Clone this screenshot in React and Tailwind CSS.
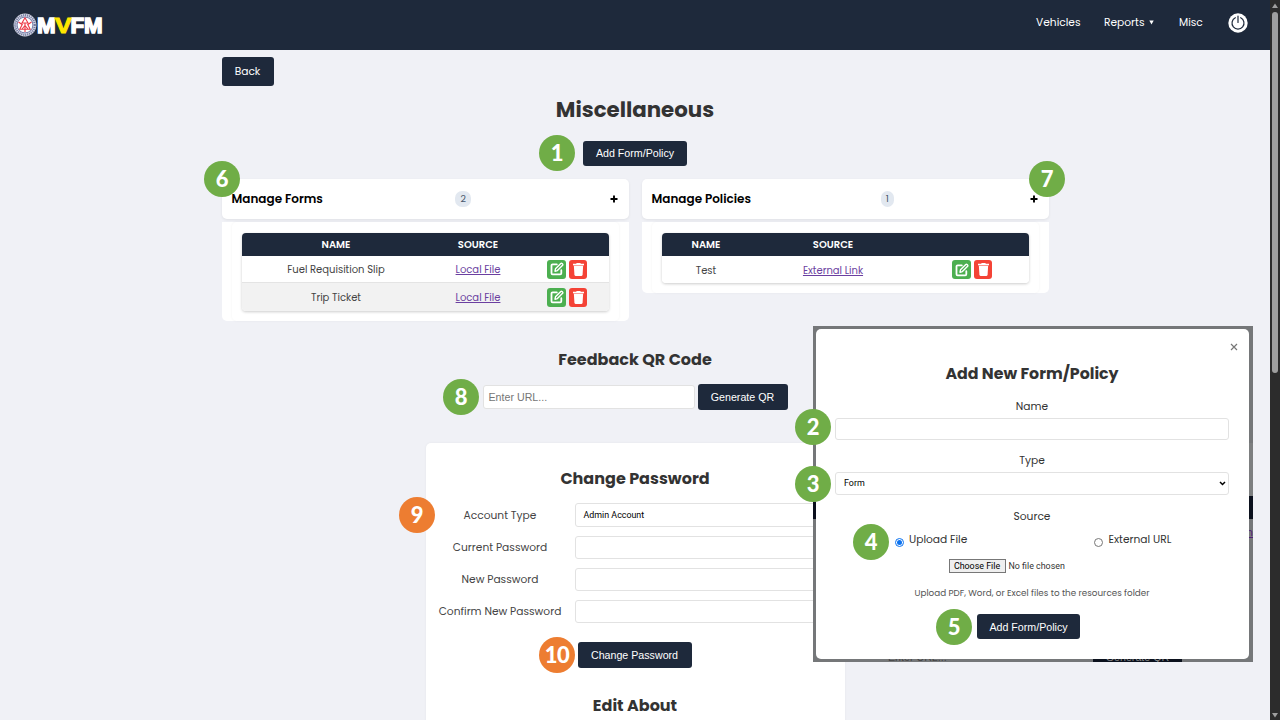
import React from "react";

const POPPINS = "font-['Poppins','Inter',sans-serif]";
const ARIAL = "font-['Liberation_Sans',Arial,sans-serif]";

function EditIcon() {
  return (
    <svg width="14" height="14" viewBox="0 0 14 14" fill="none" stroke="#fff">
      <path d="M6.800 2.400H2.600A1.100 1.100 0 0 0 1.500 3.500V11.300A1.100 1.100 0 0 0 2.600 12.400H10.200A1.100 1.100 0 0 0 11.300 11.300V8.200" strokeWidth="1.800" strokeLinecap="round" />
      <path d="M5 9.200l.5-2.400L10.800 1.500a.9.900 0 0 1 1.200 0l.6.6a.9.900 0 0 1 0 1.200L7.400 8.600z" strokeWidth="1.400" strokeLinejoin="round" />
    </svg>
  );
}

function TrashIcon() {
  return (
    <svg width="13" height="15" viewBox="0 0 13 15" fill="#fff">
      <path d="M4.600 1h3.800l.4.700H12v1.300H1V1.700h3.200z" />
      <path d="M1.300 3h10.400v.9H1.300z" opacity=".5" />
      <path d="M1.900 3.900h9.200l-.5 8.900c-.1.700-.5 1.100-1.100 1.100H3.500c-.6 0-1-.4-1.100-1.100z" />
    </svg>
  );
}

function Actions() {
  return (
    <div className="flex gap-[3px]">
      <span className="flex h-[19px] w-[19px] items-center justify-center rounded-[3px] bg-[#4caf50]">
        <EditIcon />
      </span>
      <span className="flex h-[19px] w-[17.5px] items-center justify-center rounded-[3px] bg-[#f44336]">
        <TrashIcon />
      </span>
    </div>
  );
}

function Section({ title, count, countClass, cols, rows }) {
  return (
    <section className="flex w-[407px] flex-col gap-[3px]">
      <div className="flex h-10 items-center justify-between rounded-[5px] bg-white px-[10px] shadow-[0_1px_3px_rgba(0,0,0,0.07)]">
        <h3 className="whitespace-nowrap text-[12px] font-semibold text-black">{title}</h3>
        <span className={`flex h-4 items-center justify-center rounded-[7px] bg-[#e2e8f0] text-[9.5px] text-[#475569] ${countClass}`}>{count}</span>
        <span className="flex w-[15px] justify-end pr-px">
          <svg width="8" height="8" viewBox="0 0 8 8">
            <path d="M4 .5v7M.5 4h7" stroke="#000" strokeWidth="1.9" />
          </svg>
        </span>
      </div>
      <div className="rounded-b-[5px] bg-white px-[10px]">
        <div className="rounded-[5px] px-[10px] pt-[11px] pb-[10px] shadow-[0_0_3px_rgba(0,0,0,0.05)]">
          <div className="overflow-hidden rounded-[4px] shadow-[0_1px_3px_rgba(0,0,0,0.2)]">
            <div className={`grid h-[23px] items-center bg-[#1e293b] text-center text-[10px] font-semibold text-white ${cols}`}>
              <span className="pl-px">NAME</span>
              <span className="pl-px">SOURCE</span>
              <span />
            </div>
            {rows.map(([name, link]) => (
              <div key={name} className={`grid h-[27.4px] items-center justify-items-center border-b border-[#e4e4e4] text-[10px] text-[#444] last:border-b-0 odd:bg-[#f2f2f2] even:bg-white ${cols}`}>
                <span className="whitespace-nowrap pl-px pt-[1.5px]">{name}</span>
                <span className="whitespace-nowrap pl-px pt-[1.5px] text-[#6b3fa0] underline">{link}</span>
                <Actions />
              </div>
            ))}
          </div>
        </div>
      </div>
    </section>
  );
}

function DarkButton({ className = "", children }) {
  return (
    <button className={`flex items-center justify-center whitespace-nowrap rounded-[3px] bg-[#1e293b] text-[10.67px] text-white ${ARIAL} ${className}`}>{children}</button>
  );
}

function Badge({ n, color = "bg-[#70ad47]", place }) {
  return (
    <span className={`absolute z-20 flex h-9 w-9 items-center justify-center rounded-full font-['Lato',sans-serif] text-[22px] font-black leading-none tracking-[-0.5px] text-white ${color} ${place}`}>{n}</span>
  );
}

function PasswordRow({ label, children, className = "" }) {
  return (
    <div className={`flex items-center ${className}`}>
      <label className="w-[149px] whitespace-nowrap pt-[2px] text-center text-[10.67px] text-[#444]">{label}</label>
      <div className="flex h-full flex-1 items-center rounded-[3px] border border-[#e2e2e2] bg-white px-2 text-[8.89px] text-black">{children}</div>
    </div>
  );
}

function Modal() {
  return (
    <div className="absolute left-[813px] top-[326px] z-10 h-[336px] w-[440px] overflow-hidden bg-[#757779]">
      <div className="absolute right-0 top-[117px] h-[53px] w-1 bg-[#7d7f80]" />
      <div className="absolute right-0 top-[170px] h-[23px] w-1 bg-[#0b111d]" />
      <div className="absolute left-0 top-[176px] h-[17px] w-1 bg-[#0b0f1d]" />
      <span className="absolute right-0 top-[199px] text-[10px] text-[#4f1d78] underline">n</span>
      <span className={`absolute left-[75px] top-[325px] text-[10.67px] leading-[13px] text-[#444] ${ARIAL}`}>Enter URL...</span>
      <div className={`absolute left-[280px] top-[320px] h-[20px] w-[89px] bg-[#0b111d] pt-[5px] text-center text-[10.67px] leading-[13px] text-[#888] ${ARIAL}`}>Generate QR</div>

      <div className="relative ml-[2.5px] mt-[2.5px] flex h-[330px] w-[433.5px] flex-col rounded-[5px] bg-white pl-[19.5px] pr-5 text-[#333]">
        <svg width="8" height="8" viewBox="0 0 8 8" className="absolute right-[11.5px] top-[14px]">
          <path d="M1 1l6 6M7 1l-6 6" stroke="#777" strokeWidth="1.2" />
        </svg>
        <h2 className="mt-[33px] text-center text-[15.8px] font-bold leading-6">Add New Form/Policy</h2>
        <label className="mt-[13px] text-center text-[10.67px] leading-4">Name</label>
        <div className="mt-[3px] h-[22px] rounded-[3px] border border-[#e2e2e2]" />
        <label className="mt-[13px] text-center text-[10.67px] leading-4">Type</label>
        <div className="mt-[3.500px] flex h-[23px] items-center justify-between rounded-[3px] border border-[#e2e2e2] pl-2 pr-[2px] font-['Roboto',sans-serif] text-[8.89px] text-black">
          <span className="pt-px">Form</span>
          <svg width="7" height="5" viewBox="0 0 7 5"><path d="M1 1l2.5 2.5L6 1" fill="none" stroke="#000" strokeWidth="1.5" /></svg>
        </div>
        <label className="mt-[13.500px] text-center text-[10.67px] leading-4">Source</label>
        <div className="mt-[7px] flex h-4 items-center text-[10.67px]">
          <span className="ml-[60px] mt-[5px] flex h-[9px] w-[9px] items-center justify-center rounded-full border border-[#0b72f0]">
            <span className="h-[5px] w-[5px] rounded-full bg-[#0b72f0]" />
          </span>
          <span className="ml-[5px] w-[185px] whitespace-nowrap">Upload File</span>
          <span className="mt-[5px] h-[9px] w-[9px] rounded-full border border-[#777]" />
          <span className="ml-[5.500px] whitespace-nowrap">External URL</span>
        </div>
        <div className="ml-[113.500px] mt-[11.500px] flex h-[14px] items-center gap-[3px] whitespace-nowrap font-['Roboto',sans-serif] text-[8.89px]">
          <span className="flex h-[14px] w-[57px] items-center justify-center border border-[#777] bg-[#efefef] pt-px text-black">Choose File</span>
          <span className="pt-px">No file chosen</span>
        </div>
        <p className="mt-[13px] whitespace-nowrap text-center text-[8.8px] leading-[14px] text-[#555]">Upload PDF, Word, or Excel files to the resources folder</p>
        <DarkButton className="ml-[142px] mt-[14px] h-[25px] w-[103px]">Add Form/Policy</DarkButton>
      </div>
    </div>
  );
}

export default function App() {
  return (
    <div className={`relative flex h-[720px] w-[1280px] overflow-hidden bg-[#f0f1f6] ${POPPINS}`}>
      <div className="flex w-[1270px] flex-col">
        <header className="flex h-[50px] shrink-0 items-center justify-between bg-[#1e293b] pl-[13px] pr-[22px] text-white">
          <div className="flex items-center">
            <svg width="24" height="24" viewBox="0 0 24 24">
              <circle cx="12" cy="12" r="11.4" fill="#d9dbe6" />
              <circle cx="12" cy="12" r="9.8" fill="none" stroke="#7179a0" strokeWidth="2.2" strokeDasharray="1.1 .9" />
              <circle cx="12" cy="12" r="7.9" fill="#fff" stroke="#424d8c" strokeWidth=".7" />
              <path d="M12 4.800l-3 5.200h6zM12 10v9M5.500 9l3.500 2.500M18.500 9L15 11.500M9.500 11l-2.700 5.200h10.400L14.500 11M9 16l3-3.500 3 3.500" fill="none" stroke="#ec3a48" strokeWidth="1.100" />
            </svg>
            <span className={`flex h-6 w-[67px] items-center whitespace-nowrap pt-px text-[22.300px] font-bold leading-6 [-webkit-text-stroke:1.500px_#fff] ${ARIAL}`}>
              <span>M<span className="inline-block scale-x-112 text-[#ffe600] [-webkit-text-stroke:1px_#ffe600]">V</span>FM</span>
            </span>
          </div>
          <nav className="flex items-center pb-[5px] text-[10.67px]">
            <span className="w-[68px]">Vehicles</span>
            <span className="w-[45px]">Reports</span>
            <svg width="5" height="5" viewBox="0 0 5 5" className="mr-[25px]"><path d="M.3.5h4.400L2.500 4.500z" fill="#fff" /></svg>
            <span className="w-[49px]">Misc</span>
            <svg width="20" height="20" viewBox="0 0 20 20">
              <circle cx="10" cy="10" r="9.700" fill="#fff" />
              <path d="M7.300 4.700a6 6 0 1 0 5.400 0M10 3v6.500" fill="none" stroke="#1e293b" strokeWidth="1.200" strokeLinecap="round" />
            </svg>
          </nav>
        </header>

        <main className="flex flex-col items-center text-[#333]">
          <div className="mt-[7px] w-[827px]">
            <button className="flex h-[29px] w-[52px] items-center justify-center rounded-[3px] bg-[#1e293b] text-[10.67px] text-white">Back</button>
          </div>
          <h1 className="mt-[8px] text-[21.33px] font-bold leading-8">Miscellaneous</h1>
          <DarkButton className="mt-[14.500px] h-[25.500px] w-[104px]">Add Form/Policy</DarkButton>
          <div className="mt-[13px] flex h-[142px] items-start gap-[13px]">
            <Section title="Manage Forms" count="2" countClass="w-4" cols="grid-cols-[188px_96px_83px]"
              rows={[["Fuel Requisition Slip", "Local File"], ["Trip Ticket", "Local File"]]} />
            <Section title="Manage Policies" count="1" countClass="w-[13px]" cols="grid-cols-[88px_166px_113px]"
              rows={[["Test", "External Link"]]} />
          </div>
          <h2 className="mt-[27px] text-[16px] font-bold leading-6">Feedback QR Code</h2>
          <div className="mt-[12px] flex h-[26px] items-center gap-[3px]">
            <div className={`flex h-6 w-[212px] items-center rounded-[3px] border border-[#e2e2e2] bg-white pl-[5px] text-[10.67px] text-[#757575] ${ARIAL}`}>Enter URL...</div>
            <DarkButton className="h-[25.500px] w-[90px]">Generate QR</DarkButton>
          </div>
          <section className="mt-[33px] flex h-[300px] w-[419px] flex-col rounded-t-[5px] bg-white pr-[14px] shadow-[0_0_3px_rgba(0,0,0,0.05)]">
            <h2 className="ml-[14px] mt-[24px] text-center text-[16px] font-bold leading-6">Change Password</h2>
            <PasswordRow label="Account Type" className="mt-[11.500px] h-6"><span className="pt-[1.5px] font-['Roboto',sans-serif]">Admin Account</span></PasswordRow>
            <PasswordRow label="Current Password" className="mt-[9.500px] h-[22.500px]" />
            <PasswordRow label="New Password" className="mt-[9.500px] h-[22.500px]" />
            <PasswordRow label="Confirm New Password" className="mt-[9.500px] h-[22.500px]" />
            <DarkButton className="ml-[152px] mt-[19.500px] h-[25.500px] w-[114px]">Change Password</DarkButton>
            <h2 className="ml-[14px] mt-[26px] text-center text-[16px] font-bold leading-6">Edit About</h2>
          </section>
        </main>
      </div>

      <div className="flex w-[10px] flex-col items-center bg-[#2c2c2c]">
        <svg width="8" height="12" viewBox="0 0 8 12"><path d="M4 3.500L7 8H1z" fill="#9f9f9f" /></svg>
        <div className="h-[361px] w-[6px] rounded-full bg-[#9f9f9f]" />
        <svg width="8" height="10" viewBox="0 0 8 10" className="mt-auto"><path d="M4 7.500L1 3h6z" fill="#9f9f9f" /></svg>
      </div>

      <Modal />

      <Badge n="1" place="left-[539px] top-[135px]" />
      <Badge n="6" place="left-[204px] top-[161px]" />
      <Badge n="7" place="left-[1029px] top-[161px]" />
      <Badge n="8" place="left-[443px] top-[379px]" />
      <Badge n="2" place="left-[795px] top-[409px]" />
      <Badge n="3" place="left-[795px] top-[466px]" />
      <Badge n="4" place="left-[853px] top-[524px]" />
      <Badge n="5" place="left-[936px] top-[609px]" />
      <Badge n="9" color="bg-[#ed7d31]" place="left-[399px] top-[497px]" />
      <Badge n="10" color="bg-[#ed7d31]" place="left-[539px] top-[637px]" />
    </div>
  );
}
